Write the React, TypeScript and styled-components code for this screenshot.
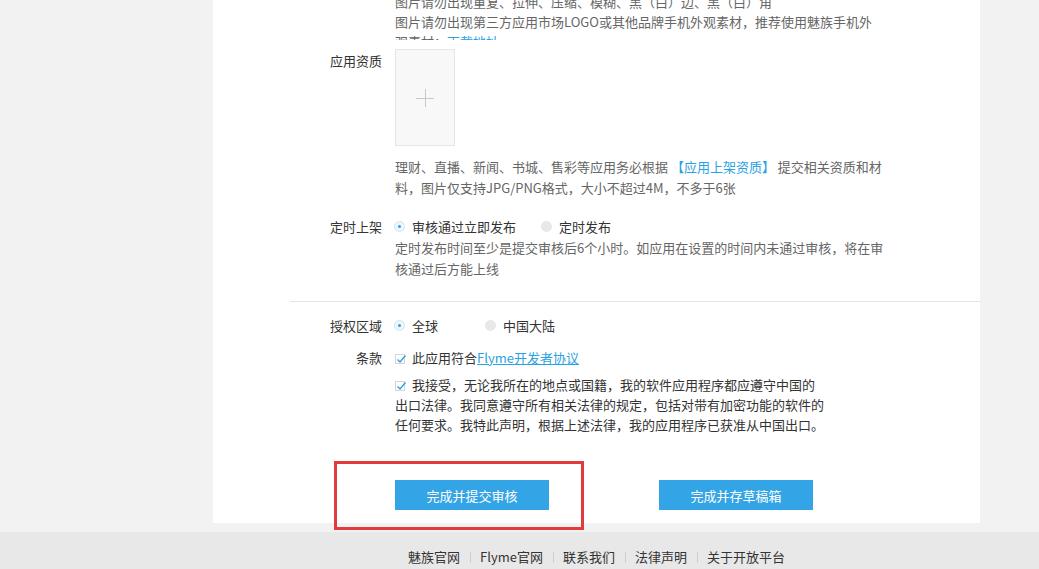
import styled, { createGlobalStyle } from 'styled-components';

const GlobalStyle = createGlobalStyle`
  html, body {
    margin: 0;
    padding: 0;
    background: #f2f2f2;
    font-family: "Noto Sans CJK SC", "Liberation Sans", sans-serif;
    font-size: 13px;
    color: #333;
    overflow: hidden;
  }
`;

const Page = styled.div`
  width: 100%;
  height: 569px;
  overflow: hidden;
`;

const Card = styled.div`
  width: 767px;
  margin-left: 213px;
  background: #fff;
  padding-bottom: 13px;
`;

const Row = styled.div<{ top?: number }>`
  display: grid;
  grid-template-columns: 169px 1fr;
  column-gap: 13px;
  margin-top: ${({ top }) => top ?? 0}px;
`;

const Label = styled.div`
  text-align: right;
  line-height: 21px;
  color: #333;
`;

const Content = styled.div`
  min-width: 0;
`;

const Hint = styled.div<{ clip?: number; top?: number }>`
  width: 490px;
  line-height: 21px;
  color: #666;
  margin-top: ${({ top }) => top ?? 0}px;
  ${({ clip }) => clip && `height: ${clip}px; overflow: hidden;`}
`;

const TopHint = styled(Hint)`
  width: 482px;
  line-height: 20px;
  margin-top: -8px;
`;

const Link = styled.a<{ underline?: boolean }>`
  color: #2aa2e2;
  text-decoration: ${({ underline }) => (underline ? 'underline' : 'none')};
`;

const Upload = styled.div`
  width: 58px;
  height: 95px;
  margin-top: -1px;
  border: 1px solid #e6e6e6;
  background: #f8f8f8;
  position: relative;

  &::before,
  &::after {
    content: '';
    position: absolute;
    left: 50%;
    top: 50%;
    background: #c8c8c8;
  }
  &::before {
    width: 18px;
    height: 1px;
    margin: 0 0 0 -9px;
  }
  &::after {
    width: 1px;
    height: 18px;
    margin: -9px 0 0 0;
  }
`;

const Options = styled.div`
  display: flex;
  align-items: center;
  line-height: 21px;
  height: 21px;
`;

const Option = styled.label<{ space: number }>`
  display: flex;
  align-items: center;
  margin-right: ${({ space }) => space}px;
  color: #333;
`;

const Radio = styled.span<{ checked?: boolean }>`
  width: 11px;
  height: 11px;
  border-radius: 50%;
  margin: 0 7px 0 -1px;
  box-sizing: border-box;
  display: inline-flex;
  align-items: center;
  justify-content: center;
  background: ${({ checked }) => (checked ? '#eef6fb' : '#e8e8e8')};
  border: 1px solid ${({ checked }) => (checked ? '#cfe6f4' : '#e8e8e8')};

  &::after {
    content: '';
    width: 3px;
    height: 3px;
    border-radius: 50%;
    background: ${({ checked }) => (checked ? '#2aa2e2' : 'transparent')};
  }
`;

const Check = styled.span`
  display: inline-block;
  width: 10px;
  height: 10px;
  border: 1px solid #d6d6d6;
  box-sizing: border-box;
  margin: 0 7px 0 0;
  vertical-align: -1px;
  position: relative;

  svg {
    position: absolute;
    left: -1px;
    top: -2px;
  }
`;

const CheckLine = styled.div`
  line-height: 21px;
  color: #333;
`;

const Terms = styled.div`
  width: 430px;
  line-height: 20px;
  color: #333;
  margin-top: 7px;
`;

const Divider = styled.div`
  margin: 22px 0 0 77px;
  height: 1px;
  background: #e4e4e4;
`;

const Buttons = styled.div`
  display: flex;
  gap: 110px;
  margin-top: 45px;
`;

const Mark = styled.div`
  position: relative;

  &::before {
    content: '';
    position: absolute;
    left: -61px;
    top: -19px;
    width: 244px;
    height: 63px;
    border: 3px solid #e23b3b;
    pointer-events: none;
  }
`;

const Button = styled.button`
  width: 154px;
  height: 30px;
  border: none;
  background: #33a4e5;
  color: #fff;
  font-family: inherit;
  font-size: 13px;
  cursor: pointer;
  padding: 0;
`;

const Footer = styled.footer`
  margin-top: 9px;
  height: 60px;
  background: #e8e8e8;
`;

const FooterNav = styled.nav`
  width: 767px;
  margin-left: 213px;
  display: flex;
  justify-content: center;
  align-items: center;
  padding-top: 15px;
  line-height: 20px;
`;

const FooterLink = styled.a`
  color: #333;
  text-decoration: none;
  padding: 0 10px;
  position: relative;

  & + &::before {
    content: '';
    position: absolute;
    left: 0;
    top: 5px;
    width: 1px;
    height: 11px;
    background: #cfcfcf;
  }
`;

const Tick = () => (
  <svg width="12" height="12" viewBox="0 0 12 12">
    <path d="M2.5 6.5 L5 9 L10.5 2.5" fill="none" stroke="#2aa2e2" strokeWidth="1.4" />
  </svg>
);

const footerLinks = ['魅族官网', 'Flyme官网', '联系我们', '法律声明', '关于开放平台'];

function App() {
  return (
    <Page>
      <GlobalStyle />
      <Card>
        <Row>
          <Label />
          <Content>
            <TopHint clip={48}>
              图片请勿出现重复、拉伸、压缩、模糊、黑（白）边、黑（白）角
              <br />
              图片请勿出现第三方应用市场LOGO或其他品牌手机外观素材，推荐使用魅族手机外观素材：
              <Link href="#">下载地址</Link>
            </TopHint>
          </Content>
        </Row>

        <Row top={10}>
          <Label>应用资质</Label>
          <Content>
            <Upload />
            <Hint top={10}>
              理财、直播、新闻、书城、售彩等应用务必根据 <Link href="#">【应用上架资质】</Link> 提交相关资质和材料，图片仅支持JPG/PNG格式，大小不超过4M，不多于6张
            </Hint>
          </Content>
        </Row>

        <Row top={18}>
          <Label>定时上架</Label>
          <Content>
            <Options>
              <Option space={26}>
                <Radio checked />
                审核通过立即发布
              </Option>
              <Option space={0}>
                <Radio />
                定时发布
              </Option>
            </Options>
            <Hint>定时发布时间至少是提交审核后6个小时。如应用在设置的时间内未通过审核，将在审核通过后方能上线</Hint>
          </Content>
        </Row>

        <Divider />

        <Row top={13}>
          <Label>授权区域</Label>
          <Content>
            <Options>
              <Option space={48}>
                <Radio checked />
                全球
              </Option>
              <Option space={0}>
                <Radio />
                中国大陆
              </Option>
            </Options>
          </Content>
        </Row>

        <Row top={11}>
          <Label>条款</Label>
          <Content>
            <CheckLine>
              <Check>
                <Tick />
              </Check>
              此应用符合
              <Link href="#" underline>
                Flyme开发者协议
              </Link>
            </CheckLine>
            <Terms>
              <Check>
                <Tick />
              </Check>
              我接受，无论我所在的地点或国籍，我的软件应用程序都应遵守中国的出口法律。我同意遵守所有相关法律的规定，包括对带有加密功能的软件的任何要求。我特此声明，根据上述法律，我的应用程序已获准从中国出口。
            </Terms>
          </Content>
        </Row>

        <Row>
          <Label />
          <Buttons>
            <Mark>
              <Button>完成并提交审核</Button>
            </Mark>
            <Button>完成并存草稿箱</Button>
          </Buttons>
        </Row>
      </Card>
      <Footer>
        <FooterNav>
          {footerLinks.map((t) => (
            <FooterLink key={t} href="#">
              {t}
            </FooterLink>
          ))}
        </FooterNav>
      </Footer>
    </Page>
  );
}

export default App;
